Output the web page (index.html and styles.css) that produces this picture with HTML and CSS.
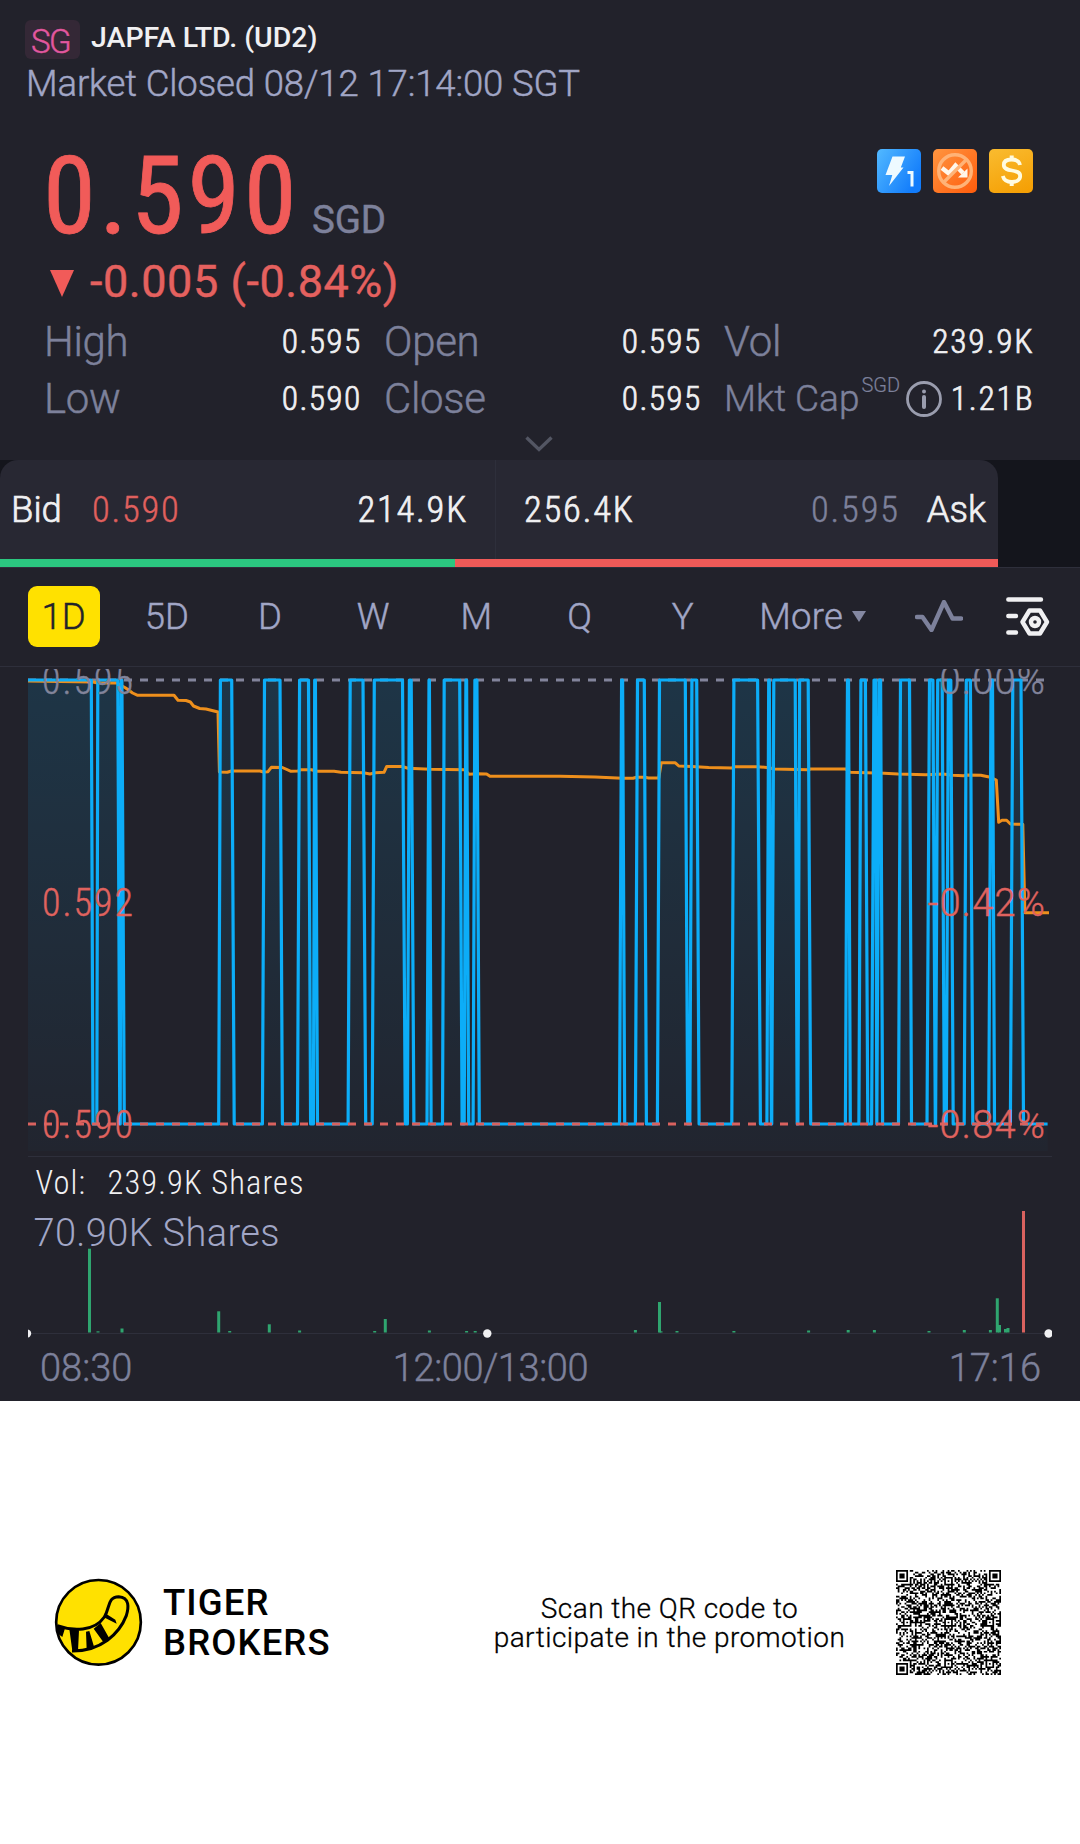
FILE: index.html
```html
<!DOCTYPE html>
<html lang="en">
<head>
<meta charset="utf-8">
<title>JAPFA LTD. (UD2)</title>
<link rel="stylesheet" href="styles.css">
</head>
<body>
<main class="quote">
  <header class="head">
    <div class="head-row"><span class="market">SG</span><h1 class="name">JAPFA LTD. (UD2)</h1></div>
    <p class="status">Market Closed 08/12 17:14:00 SGT</p>
  </header>

  <section class="price">
    <div class="price-row">
      <div class="last"><span class="last-value">0.590</span><span class="currency">SGD</span></div>
      <div class="badges">
        <svg class="badge" viewBox="0 0 44 44">
          <defs><linearGradient id="blue" x1="0" y1="0" x2="1" y2=".6"><stop offset="0" stop-color="#52b9ff"/><stop offset="1" stop-color="#127cfb"/></linearGradient></defs>
          <rect width="44" height="44" rx="5" fill="url(#blue)"/>
          <path d="M15.5 7.5H28L23.8 18.5H26.5L12 37L15.3 26H8.5Z" fill="#eefaff"/>
          <path d="M30.5 23.5H35V37.5" fill="none" stroke="#eefaff" stroke-width="3"/>
        </svg>
        <svg class="badge" viewBox="0 0 44 44">
          <defs><linearGradient id="orange" x1="0" y1="0" x2="1" y2="1"><stop offset="0" stop-color="#ff9540"/><stop offset="1" stop-color="#ff5c0c"/></linearGradient></defs>
          <rect width="44" height="44" rx="5" fill="url(#orange)"/>
          <path d="M9 19L16 24.5L22.5 16.5L30 24" fill="none" stroke="#fff6ea" stroke-width="4.5"/>
          <path d="M34.5 19.5V28.5H25Z" fill="#fff6ea"/>
          <circle cx="22" cy="22" r="16.3" fill="none" stroke="#ffb377" stroke-width="3.4"/>
          <path d="M33.5 10.5L10.5 33.5" stroke="#ffb377" stroke-width="3.4"/>
        </svg>
        <svg class="badge" viewBox="0 0 44 44">
          <defs><linearGradient id="gold" x1=".3" y1="0" x2=".7" y2="1"><stop offset="0" stop-color="#f9b92c"/><stop offset="1" stop-color="#f5a005"/></linearGradient></defs>
          <rect width="44" height="44" rx="5" fill="url(#gold)"/>
          <path d="M31 16C30 11 26 10.5 22.5 10.5C17.5 10.5 14.8 12.6 14.8 16C14.8 24 31.2 19 31.2 27C31.2 31 27.5 33 23 33C18 33 15 31.5 13.800 27" fill="none" stroke="#fffbe0" stroke-width="3.8"/>
          <path d="M22.7 6.5V11M22.7 33V37" stroke="#fffbe0" stroke-width="4"/>
        </svg>
      </div>
    </div>
    <div class="change"><svg class="down" viewBox="0 0 24 27"><path d="M0 0H24L12 27Z"/></svg>-0.005 (-0.84%)</div>
    <div class="stats">
      <div class="stat"><span class="label">High</span><span class="value">0.595</span></div>
      <div class="stat"><span class="label">Open</span><span class="value">0.595</span></div>
      <div class="stat"><span class="label">Vol</span><span class="value value-wide">239.9K</span></div>
      <div class="stat"><span class="label">Low</span><span class="value">0.590</span></div>
      <div class="stat"><span class="label">Close</span><span class="value">0.595</span></div>
      <div class="stat"><span class="label label-cap">Mkt Cap<sup>SGD</sup></span>
        <svg class="info" viewBox="0 0 36 36"><circle cx="18" cy="18" r="16.5"/><path d="M18 16V26"/><circle class="dot" cx="18" cy="10.5" r="2"/></svg>
        <span class="value value-wide">1.21B</span></div>
    </div>
    <svg class="chevron" viewBox="0 0 28 16"><path d="M1.5 1.5L14 13.5L26.5 1.5"/></svg>
  </section>

  <section class="book">
    <div class="book-panel">
      <div class="side bid"><span>Bid</span><span class="px px-red">0.590</span><span class="qty">214.9K</span></div>
      <div class="side ask"><span class="qty">256.4K</span><span class="px">0.595</span><span>Ask</span></div>
      <div class="ratio"><i class="ratio-bid"></i><i class="ratio-ask"></i></div>
    </div>
  </section>

  <nav class="tabs">
    <div class="periods">
      <span class="tab tab-on">1D</span><span class="tab">5D</span><span class="tab">D</span><span class="tab">W</span><span class="tab">M</span><span class="tab">Q</span><span class="tab">Y</span>
    </div>
    <span class="more">More</span>
    <svg class="caret" viewBox="0 0 14 11"><path d="M0 0H14L7 11Z"/></svg>
    <svg class="pulse" viewBox="0 0 48 32"><path d="M2 17H7.5L16.5 30L29 2L37.5 18.5H46"/></svg>
    <svg class="settings" viewBox="0 0 44 39"><path d="M2.3 2.5H35M2.3 19H10M2.3 35.5H10M23.5 13.5H34L41 25L34 36.5H23.5L16.5 25Z"/><circle cx="29" cy="25" r="4"/></svg>
  </nav>

  <section class="chart">
    <svg class="price-chart" viewBox="28 669 1024 487">
      <defs><linearGradient id="fill" x1="0" y1="680" x2="0" y2="1151" gradientUnits="userSpaceOnUse"><stop offset="0" stop-color="#00b4ff" stop-opacity=".13"/><stop offset="1" stop-color="#00b4ff" stop-opacity=".02"/></linearGradient></defs>
      <path class="grid" d="M28 680H1044"/>
      <path id="area" fill="url(#fill)"/>
      <polyline class="average" points="28,681 93,682 97.5,683 117,683 125.7,688 132.6,693 137.7,695.3 174,695.3 178,700.3 186,700.5 190.4,702 193.5,706 199.7,708.5 206,709 218,712 219.4,772 227.3,772.3 231.4,771 260,771 263.4,772 268,771.7 271.3,767.3 282.4,767.5 291,771.3 298,771 301,769.7 311.6,769.7 316.8,771.3 334,771.3 341,772.3 363.3,772.7 370,774 375.3,772.7 384,772.3 386.7,766.5 402.2,766.5 408,768.3 430.4,769.3 464.9,769.7 469,774.3 477,773.7 486.6,774 490,776.3 560,776.3 595,777 622.6,778.3 633,778.3 636.4,777.3 645,777.3 648.5,778 658.8,778 661.2,762.8 675.3,762.8 678.8,766 691.5,766.5 708.7,767.5 732,768 735,766.7 757,766.7 769,767.7 774,769 808.6,769.7 810.7,769 845.8,769 850,772.3 884,773.3 898,774 925.7,774.7 943,774 953,775.3 963.5,775.7 967,775 980.8,775.3 990.4,777.3 996.3,780 998.7,822.3 1002,820.3 1006.6,820.3 1010.4,824 1022.8,824.3 1024.9,912.7 1049,912.7"/>
      <path id="line" class="line"/>
      <path class="grid grid-low" d="M28 1124H1048"/>
      <text class="axis digits" x="42" y="693.5">0.595</text>
      <text class="axis axis-red digits" x="42" y="916">0.592</text>
      <text class="axis axis-red digits" x="42" y="1138">0.590</text>
      <text class="axis percent" x="1046" y="693.5">0.00%</text>
      <text class="axis axis-red percent" x="1046" y="916">-0.42%</text>
      <text class="axis axis-red percent" x="1046" y="1138">-0.84%</text>
    </svg>
    <svg class="volume-chart" viewBox="28 1157 1024 184">
      <text class="vol" x="35.5" y="1193.5">Vol:</text>
      <text class="vol" x="107.5" y="1193.5">239.9K Shares</text>
      <text class="vol-max" x="33.5" y="1245.5">70.90K Shares</text>
      <path class="base" d="M28 1333.5H1052"/>
      <g id="bars"></g>
      <g class="dots"><circle cx="27" cy="1333.5" r="4.2"/><circle cx="487.3" cy="1333.5" r="4.2"/><circle cx="1048.6" cy="1333.5" r="4.2"/></g>
    </svg>
    <div class="times"><span>08:30</span><span class="mid">12:00/13:00</span><span>17:16</span></div>
  </section>
</main>

<footer class="footer">
  <svg class="logo" viewBox="74 55 267 267">
    <circle cx="207.5" cy="188" r="127" fill="#ffe100" stroke="#000" stroke-width="8"/>
    <path d="M84 198C130 215 195 216 225 172C242 146 234 111 268 111C302 113 298 145 291 168C270 222 215 275 128 274" fill="none" stroke="#000" stroke-width="9"/>
    <path d="M84 196L107 206L99 232L86 222ZM120 208L149 212L146 274L129 274ZM170 216L180 214L195 264L172 270ZM193 207L214 190L241 238L224 250ZM222 172L230 162L258 180L262 192Z"/>
  </svg>
  <div class="brand">TIGER<br>BROKERS</div>
  <p class="scan">Scan the QR code to<br>participate in the promotion</p>
  <svg class="qr" viewBox="0 0 61 61"><path id="qr"/></svg>
</footer>
<script src="chart.js"></script>
</body>
</html>
```
FILE: styles.css
```css
* { box-sizing: border-box; margin: 0; padding: 0; }
body { width: 1080px; background: #fff; font-family: Roboto, "Liberation Sans", sans-serif; font-weight: 300; color: #f0f0f2; white-space: nowrap; -webkit-text-stroke: .45px currentColor; }
svg { display: block; flex: none; }
.quote { height: 1401px; background: #22222b; display: flex; flex-direction: column; }

.head { height: 110px; padding: 20px 25px 0; }
.head-row { display: flex; height: 39px; }
.market { width: 55px; height: 39px; border-radius: 6px; background: #342836; color: #e3579f; font-size: 33px; line-height: 44px; padding-left: 6px; letter-spacing: -1.5px; }
.name { margin-left: 11px; font-size: 28.5px; font-weight: 500; line-height: 35px; letter-spacing: 0; -webkit-text-stroke: 0; }
.status { margin-top: 4px; font-size: 36.5px; line-height: 41px; color: #a1a6c6; padding-left: 1px; letter-spacing: -.12px; }

.price { height: 350px; padding: 0 47px 0 44px; display: flex; flex-direction: column; }
.price-row { display: flex; justify-content: space-between; height: 150px; }
.last { display: flex; align-items: baseline; line-height: 173px; }
.last-value { font: 400 107px/173px "Roboto Condensed", Roboto, sans-serif; letter-spacing: 3.5px; color: #f15b59; margin-left: -1px; -webkit-text-stroke: .8px currentColor; }
.currency { font-size: 38.5px; font-weight: 400; color: #7d819b; margin-left: 12px; letter-spacing: -.2px; }
.badges { display: flex; gap: 12px; padding-top: 39px; }
.badge { width: 44px; height: 44px; }
.change { display: flex; align-items: center; height: 44px; line-height: 44px; font-size: 45px; font-weight: 400; color: #e5615f; letter-spacing: .55px; }
.down { width: 24px; height: 27px; fill: #f15b59; margin: 3px 16px 0 6px; }
.stats { display: grid; grid-template-columns: 316px 316px 1fr; grid-auto-rows: 57px; column-gap: 24px; margin-top: 9px; }
.stat { display: flex; align-items: center; justify-content: space-between; line-height: 57px; }
.label { font-size: 42px; color: #7d819b; letter-spacing: -.3px; }
.label-cap { font-size: 37px; letter-spacing: 0; display: flex; }
.label-cap sup { font-size: 20px; line-height: 30px; letter-spacing: 0; margin-left: 2px; -webkit-text-stroke: .2px currentColor; }
.value { font: 300 33.5px/55px "Roboto Condensed", Roboto, sans-serif; letter-spacing: 1.3px; margin-right: -1.5px; -webkit-text-stroke: .7px currentColor; }
.value-wide { letter-spacing: 1.8px; }
.info { width: 36px; height: 36px; fill: none; stroke: #9a9dae; stroke-width: 2.8; stroke-linecap: round; margin: 0 2px 0 0; }
.info path { stroke-width: 4; }
.info .dot { fill: #9a9dae; stroke: none; }
.chevron { width: 28px; height: 16px; margin: 9px 0 0 481px; fill: none; stroke: #535663; stroke-width: 3.4; }

.book { height: 108px; background: #14151c; border-bottom: 1px solid #2e2f3b; }
.book-panel { width: 998px; height: 107px; display: grid; grid-template: 99px 8px / 496px 502px; background: #282833; border-radius: 18px 18px 0 0; font-size: 36.5px; line-height: 99px; -webkit-text-stroke: .7px currentColor; }
.side { display: flex; }
.bid { padding: 0 27px 0 11px; border-right: 1px solid #2e2f3b; }
.ask { padding: 0 12px 0 28px; }
.bid .qty { margin-left: auto; }
.ask .px { margin: 0 27px 0 auto; }
.px { font-family: "Roboto Condensed", Roboto, sans-serif; letter-spacing: 1.8px; color: #7d819b; -webkit-text-stroke: .4px currentColor; }
.px-red { color: #e0605e; margin-left: 30px; }
.qty { font-family: "Roboto Condensed", Roboto, sans-serif; letter-spacing: 1.8px; }
.ratio { grid-column: 1 / 3; display: flex; }
.ratio-bid { width: 455px; background: #2bc780; }
.ratio-ask { flex: 1; background: #ef5a58; }

.tabs { height: 99px; padding: 0 0 2px 12px; display: flex; align-items: center; border-bottom: 1px solid #2e2f3b; font-size: 36.5px; color: #a1a6c6; }
.periods { display: grid; grid-template-columns: repeat(7, 103.2px); justify-items: center; }
.tab { min-width: 72px; height: 61px; line-height: 61px; border-radius: 9px; text-align: center; }
.tab-on { background: #ffe100; color: #22222b; }
.more { margin-left: 25px; width: 93px; letter-spacing: .2px; }
.caret { width: 14px; height: 11px; fill: #8488a2; }
.pulse { width: 48px; height: 32px; margin-left: 49px; fill: none; stroke: #7d819b; stroke-width: 4.4; stroke-linecap: round; stroke-linejoin: round; }
.settings { width: 44px; height: 39px; margin-left: 43px; fill: none; stroke: #f0f0f2; stroke-width: 4.4; stroke-linecap: round; stroke-linejoin: round; }

.chart { padding: 2px 28px 0; }
.price-chart { width: 1024px; height: 487px; overflow: hidden; }
.grid { fill: none; stroke: #82849b; stroke-width: 3; stroke-dasharray: 8 8; }
.grid-low { stroke: #d9625f; }
.average { fill: none; stroke: #ee8f1c; stroke-width: 3; stroke-linejoin: round; }
.line { fill: none; stroke: #0cadf8; stroke-width: 3.2; stroke-linejoin: round; }
.axis { font-size: 38px; fill: #82849b; stroke: #82849b; stroke-width: .4px; -webkit-text-stroke: .4px #82849b; }
.axis-red { fill: #e0635f; stroke: #e0635f; -webkit-text-stroke: .4px #e0635f; }
.digits { font-family: "Roboto Condensed", Roboto, sans-serif; letter-spacing: 2px; }
.percent { text-anchor: end; letter-spacing: 1.2px; }
.volume-chart { box-sizing: content-box; width: 1024px; height: 184px; overflow: hidden; border-top: 1px solid #2e2f3b; }
.vol { font: 300 32.5px "Roboto Condensed", Roboto, sans-serif; letter-spacing: 1.1px; fill: #f0f0f2; -webkit-text-stroke: .6px #f0f0f2; }
.vol-max { font-size: 38px; letter-spacing: .35px; fill: #a1a6c6; -webkit-text-stroke: .4px #a1a6c6; }
.base { stroke: #2e2f3b; }
.dots { fill: #f0f0f2; }
.bar-up { fill: #2fa56f; }
.bar-down { fill: #d9625f; }
.times { display: grid; grid-template-columns: 1fr auto 1fr; padding: 0 11px 0 12px; font-size: 38px; line-height: 54px; color: #7d819b; }
.times .mid { letter-spacing: -.4px; margin-left: -100px; }
.times span:last-child { text-align: right; }

.footer { height: 443px; display: flex; align-items: center; padding-left: 54px; color: #000; -webkit-text-stroke: .3px currentColor; }
.logo { width: 89px; height: 89px; }
.brand { width: 329px; margin-left: 20px; font-size: 36.5px; font-weight: 500; line-height: 39.4px; letter-spacing: 1.1px; -webkit-text-stroke: 0; }
.scan { width: 355px; text-align: center; font-size: 28px; line-height: 29px; letter-spacing: .45px; margin-top: 1px; }
.qr { width: 105px; height: 105px; margin-left: 49px; margin-top: -1px; }
```
FILE: chart.js
```js
// Alternating edges of the intraday price: falls to 0.590, rises to 0.595.
// Each pair is the x where an edge starts and the x where it ends.
const HIGH = 680, LOW = 1124;
const edges = [
  [91.3,93],[96.8,97.8],[117.8,119.8],[120.2,121.2],[121.9,124.3],[218.7,220.4],[231.7,234.2],[262.4,264.5],
  [280,282.4],[297.5,299.6],[308.5,310.6],[313.4,314.7],[315.4,317.5],[348.1,350.2],[363,365.7],[372.2,374.3],
  [402.5,405.3],[407.4,409.4],[411.2,413.9],[427,429],[429.4,431.1],[442.5,444.2],[459.7,462.1],[464.2,465.9],
  [466.6,468.7],[473.1,474.9],[476.9,479.3],[619.5,621.6],[622.6,624.7],[635.4,637.5],[644.3,646.4],[657.4,659.5],
  [685.3,687.7],[689.8,691.9],[696.7,699.1],[731.8,733.9],[757.6,760.4],[766.9,768.7],[769.3,771.4],[771.7,773.8],
  [795.2,797.2],[797.9,799.6],[808.2,810.7],[845.4,847.5],[848.5,850.3],[858.9,860.9],[865.4,867.8],[871.6,874],
  [875.7,876.8],[876.8,879.2],[880.6,882.6],[898.5,900.5],[909.5,911.5],[927,929.5],[932.9,935.3],[935.6,937.7],
  [942.2,944.3],[946.3,948.4],[950.8,953.2],[964.2,966.3],[970.4,972.8],[988.7,991.1],[992.5,994.5],
  [1010.4,1012.8],[1021,1023.5]
];
let d = `M28 ${HIGH}`, y = HIGH;
for (const [a, b] of edges) {
  d += `L${a} ${y}`;
  y = y === HIGH ? LOW : HIGH;
  d += `L${b} ${y}`;
}
d += `L1047.6 ${y}`;
document.getElementById('line').setAttribute('d', d);
document.getElementById('area').setAttribute('d', d + 'V1151H28Z');

// Volume bars: centre x, top y.
const volume = [
  [89.5,1248.7],[98,1331.3],[122,1328.5],[218.7,1311.3],[229.7,1331],[269.3,1324.3],[299.6,1330.5],[374.7,1331],
  [385.3,1319],[429.4,1330.5],[466.6,1331],[475.2,1331],[635.4,1330],[659.5,1302],[661,1331.3],[677,1331],
  [733.9,1331],[808.6,1330.5],[848.2,1330],[874.4,1330],[929,1331],[964.3,1330],[990.4,1330],[997.3,1298.3],
  [999.5,1325],[1005.5,1329],[1008,1328],[1023.5,1211,'down']
];
document.getElementById('bars').innerHTML = volume.map(([x, top, dir]) =>
  `<rect class="bar-${dir || 'up'}" x="${x - 1.5}" y="${top}" width="3" height="${1332.5 - top}"/>`).join('');

// QR symbol: finder, alignment and timing patterns with data modules around them.
const N = 61;
let seed = 20211;
const random = () => (seed = (seed * 16807) % 2147483647) / 2147483647;
const ring = (dx, dy, rings) => rings.includes(Math.max(Math.abs(dx), Math.abs(dy)));
let modules = '';
for (let r = 0; r < N; r++) for (let c = 0; c < N; c++) {
  let on = random() < 0.5;
  if (r === 6) on = c % 2 === 0;
  if (c === 6) on = r % 2 === 0;
  for (const ar of [6, 30, 54]) for (const ac of [6, 30, 54])
    if (Math.abs(r - ar) <= 2 && Math.abs(c - ac) <= 2) on = ring(r - ar, c - ac, [0, 2]);
  for (const [fr, fc] of [[3, 3], [3, N - 4], [N - 4, 3]])
    if (Math.abs(r - fr) <= 4 && Math.abs(c - fc) <= 4) on = ring(r - fr, c - fc, [0, 1, 3]);
  if (on) modules += `M${c} ${r}h1v1h-1z`;
}
document.getElementById('qr').setAttribute('d', modules);
```
